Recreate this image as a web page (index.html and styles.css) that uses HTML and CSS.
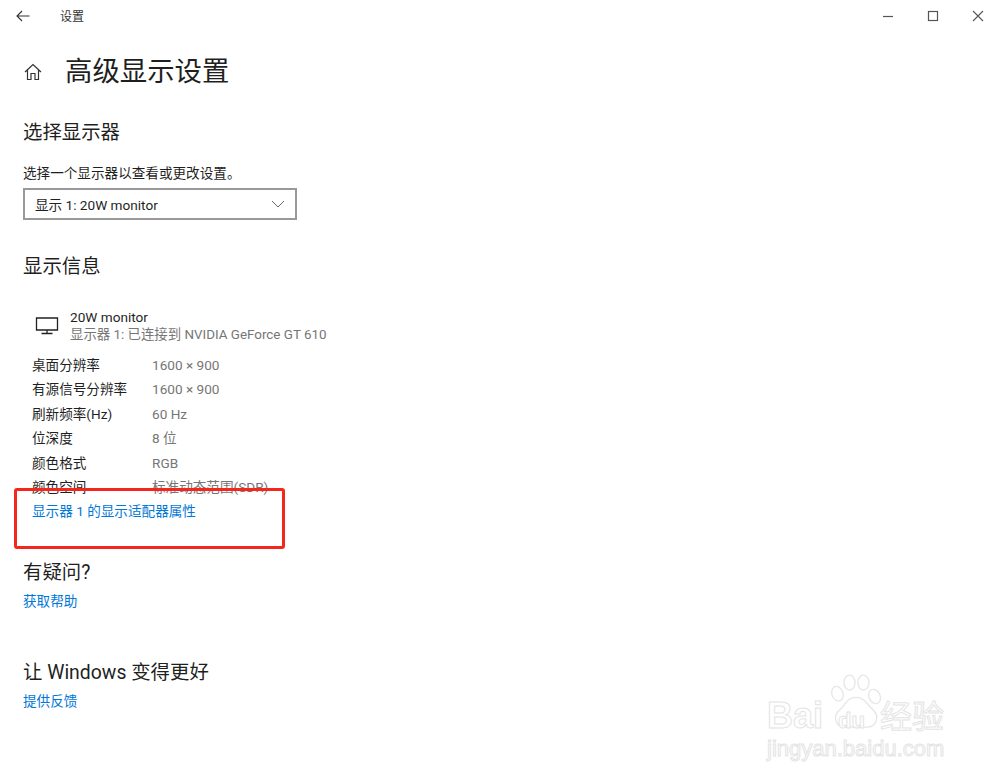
FILE: index.html
```html
<!DOCTYPE html>
<html lang="zh-CN">

<head>
    <meta charset="UTF-8">
    <title>设置</title>
    <link rel="stylesheet" href="styles.css">
</head>

<body>
    <div class="titlebar">
        <svg class="back" width="14" height="12" viewBox="0 0 14 12">
            <path d="M6 1 L1 6 L6 11 M1 6 H13.5" fill="none" stroke="#333" stroke-width="1.1" />
        </svg>
        <span class="app-name">设置</span>
        <div class="win-btns">
            <svg width="12" height="12" viewBox="0 0 12 12">
                <path d="M1 6.5 H11" stroke="#555" stroke-width="1.2" />
            </svg>
            <svg width="12" height="12" viewBox="0 0 12 12">
                <rect x="1.5" y="1.5" width="9" height="9" fill="none" stroke="#555" stroke-width="1.2" />
            </svg>
            <svg width="12" height="12" viewBox="0 0 12 12">
                <path d="M1 1 L11 11 M11 1 L1 11" stroke="#555" stroke-width="1.1" />
            </svg>
        </div>
    </div>

    <div class="page-head">
        <svg class="home" width="18" height="18" viewBox="0 0 18 18">
            <path d="M1 9 L9 1.5 L17 9 M3.5 7 V16.5 H7 V10.5 H11 V16.5 H14.5 V7" fill="none" stroke="#333" stroke-width="1.2" />
        </svg>
        <h1>高级显示设置</h1>
    </div>

    <h2 class="choose-title">选择显示器</h2>
    <p class="choose-text">选择一个显示器以查看或更改设置。</p>
    <div class="select">
        <span>显示 1: 20W monitor</span>
        <svg width="14" height="8" viewBox="0 0 14 8">
            <path d="M1 1 L7 7 L13 1" fill="none" stroke="#666" stroke-width="1" />
        </svg>
    </div>

    <h2 class="info-title">显示信息</h2>
    <div class="monitor">
        <svg width="24" height="18" viewBox="0 0 24 18">
            <path d="M1.5 1 H22.5 V13 H1.5 Z M12 13 V16.5 M6.5 16.5 H17.5" fill="none" stroke="#222" stroke-width="1.3" />
        </svg>
        <div>
            <div class="monitor-name">20W monitor</div>
            <div class="monitor-sub">显示器 1: 已连接到 NVIDIA GeForce GT 610</div>
        </div>
    </div>

    <div class="rows">
        <div class="row"><span class="key">桌面分辨率</span><span class="val">1600 × 900</span></div>
        <div class="row"><span class="key">有源信号分辨率</span><span class="val">1600 × 900</span></div>
        <div class="row"><span class="key">刷新频率(Hz)</span><span class="val">60 Hz</span></div>
        <div class="row"><span class="key">位深度</span><span class="val">8 位</span></div>
        <div class="row"><span class="key">颜色格式</span><span class="val">RGB</span></div>
        <div class="row"><span class="key">颜色空间</span><span class="val">标准动态范围(SDR)</span></div>
    </div>
    <a class="link adapter">显示器 1 的显示适配器属性</a>

    <h2 class="help-title">有疑问?</h2>
    <a class="link side">获取帮助</a>

    <h2 class="better-title">让 Windows 变得更好</h2>
    <a class="link side">提供反馈</a>

    <div class="red-box"></div>

    <div class="watermark">
        <svg class="paw" width="52" height="58" viewBox="0 0 56 62">
            <g fill="#fff" stroke="#e6e6e6" stroke-width="1.4">
                <ellipse cx="8" cy="21" rx="6" ry="8" transform="rotate(-20 8 21)" />
                <ellipse cx="21" cy="9" rx="6" ry="8" />
                <ellipse cx="36" cy="9" rx="6" ry="8" />
                <ellipse cx="48" cy="24" rx="6" ry="8" transform="rotate(-25 48 24)" />
                <path d="M28 25 C38 25 40 33 46 38 C54 45 50 57 40 57 H16 C6 57 2 45 11 38 C17 33 18 25 28 25 Z" />
            </g>
        </svg>
        <div class="wm-top"><span>Bai</span><span class="wm-du">du</span><span class="wm-cn">经验</span></div>
        <div class="wm-url">jingyan.baidu.com</div>
    </div>
</body>

</html>
```

FILE: styles.css
```css
* {
    margin: 0;
    padding: 0;
    box-sizing: border-box;
}

body {
    width: 1000px;
    height: 781px;
    position: relative;
    overflow: hidden;
    background: #fff;
    color: #1f1f1f;
    font-family: Roboto, "Noto Sans CJK SC", sans-serif;
    font-size: 13.6px;
}

.titlebar {
    height: 32px;
    display: flex;
    align-items: center;
    padding-left: 16px;
}

.back {
    margin-right: 30px;
}

.app-name {
    font-size: 12px;
    color: #333;
    margin-bottom: 2px;
}

.win-btns {
    margin-left: auto;
    display: flex;
    gap: 33px;
    padding-right: 16px;
}

.page-head {
    height: 40px;
    margin-top: 20px;
    padding-left: 24px;
    display: flex;
    align-items: center;
}

.home {
    margin-right: 23px;
}

h1 {
    font-size: 27.4px;
    font-weight: 400;
    line-height: 40px;
}

h2 {
    font-size: 19.4px;
    font-weight: 400;
    line-height: 28px;
    margin-left: 23px;
}

.choose-title {
    margin-top: 27px;
}

.choose-text {
    margin: 16px 0 0 23px;
    line-height: 20px;
}

.select {
    width: 274px;
    height: 32px;
    margin: 5px 0 0 23px;
    padding: 0 10px;
    border: 2px solid #999;
    display: flex;
    align-items: center;
    justify-content: space-between;
}

.info-title {
    margin-top: 33px;
}

.monitor {
    display: flex;
    align-items: center;
    margin: 27px 0 0 35px;
}

.monitor svg {
    margin-right: 11px;
}

.monitor-name {
    line-height: 18px;
}

.monitor-sub {
    line-height: 18px;
    font-size: 13.4px;
    color: #767676;
}

.rows {
    margin: 9px 0 0 32px;
}

.row {
    height: 24.4px;
    line-height: 24.4px;
    display: flex;
}

.key {
    width: 120px;
}

.val {
    color: #767676;
}

.link {
    display: block;
    color: #0078d7;
    line-height: 20px;
}

.adapter {
    margin: 2px 0 0 32px;
}

.side {
    margin-left: 23px;
}

.help-title {
    margin-top: 38px;
}

.help-title + .side {
    margin-top: 4px;
}

.better-title {
    margin-top: 48px;
}

.better-title + .side {
    margin-top: 4px;
}

/* 标注框 */
.red-box {
    position: absolute;
    left: 14px;
    top: 488px;
    width: 271px;
    height: 61px;
    border: 3px solid #f5261b;
    border-radius: 3px;
}

/* 水印 */
.watermark {
    position: absolute;
    left: 765px;
    top: 672px;
    width: 190px;
    height: 92px;
    color: #fff;
    -webkit-text-stroke: 1px #e4e4e4;
    font-family: "Liberation Sans", "Noto Sans CJK SC", sans-serif;
}

.paw {
    position: absolute;
    left: 65px;
    top: 2px;
}

.wm-top {
    position: absolute;
    left: 2px;
    top: 24px;
    display: flex;
    align-items: baseline;
    font-size: 36px;
    font-weight: 700;
    line-height: 40px;
}

.wm-du {
    position: relative;
    margin-left: 15px;
    font-size: 22px;
    width: 30px;
}

.wm-cn {
    margin-left: 12px;
    font-size: 32px;
    font-weight: 400;
}

.wm-url {
    position: absolute;
    left: 2px;
    top: 64px;
    font-size: 22px;
    line-height: 26px;
    white-space: nowrap;
}
```
